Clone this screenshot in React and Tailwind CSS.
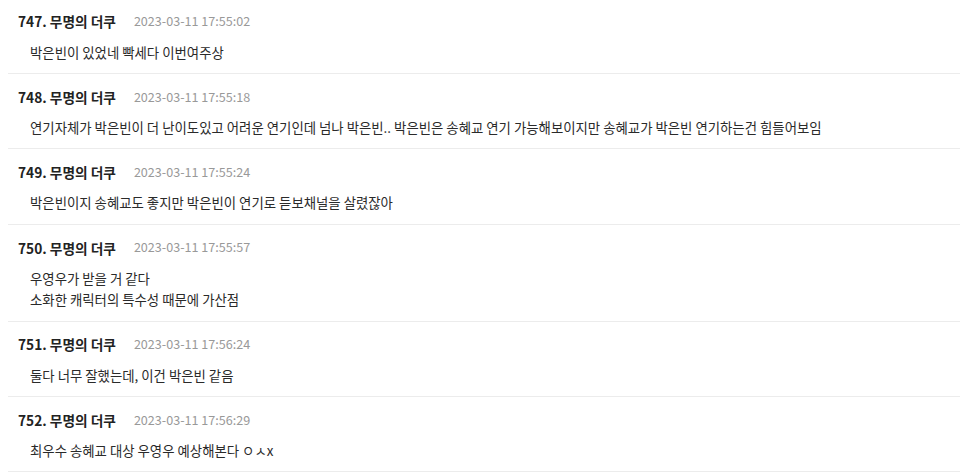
import React from "react";

const comments = [
  { no: 747, date: "2023-03-11 17:55:02", lines: ["박은빈이 있었네 빡세다 이번여주상"] },
  {
    no: 748,
    date: "2023-03-11 17:55:18",
    lines: [
      "연기자체가 박은빈이 더 난이도있고 어려운 연기인데 넘나 박은빈.. 박은빈은 송혜교 연기 가능해보이지만 송혜교가 박은빈 연기하는건 힘들어보임",
    ],
  },
  { no: 749, date: "2023-03-11 17:55:24", lines: ["박은빈이지 송혜교도 좋지만 박은빈이 연기로 듣보채널을 살렸잖아"] },
  { no: 750, date: "2023-03-11 17:55:57", lines: ["우영우가 받을 거 같다", "소화한 캐릭터의 특수성 때문에 가산점"] },
  { no: 751, date: "2023-03-11 17:56:24", lines: ["둘다 너무 잘했는데, 이건 박은빈 같음"] },
  { no: 752, date: "2023-03-11 17:56:29", lines: ["최우수 송혜교 대상 우영우 예상해본다 ㅇㅅx"] },
];

const App = () => {
  return (
    <div
      className="w-[960px] h-[472px] overflow-hidden bg-white pl-2"
      style={{ fontFamily: '"Noto Sans CJK KR", "Noto Sans", sans-serif' }}
    >
      <div className="-mt-[1.4px]">
        {comments.map((c) => (
          <div key={c.no} className="border-b border-[#ececec] pt-[13px] pb-[10px]">
            <div className="flex items-center h-5 pl-[10px]">
              <span className="text-[13.7px] font-bold text-[#222]">
                {c.no}. 무명의 더쿠
              </span>
              <span className="ml-[18px] text-[12.6px] text-[#999]">{c.date}</span>
            </div>
            <div className="mt-[10px] pl-[22px] text-[13.4px] leading-[21.4px] text-[#2a2a2a]">
              {c.lines.map((l, i) => (
                <div key={i}>{l}</div>
              ))}
            </div>
          </div>
        ))}
      </div>
    </div>
  );
};

export default App;
